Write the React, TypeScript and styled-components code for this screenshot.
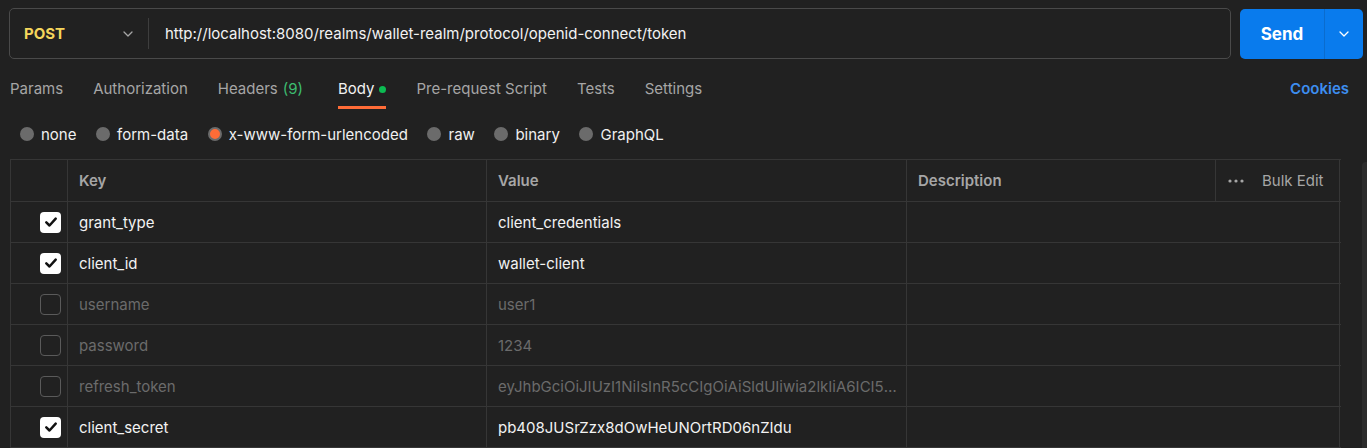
import React from 'react';
import styled, { createGlobalStyle } from 'styled-components';

const GlobalStyle = createGlobalStyle`
  html, body {
    margin: 0;
    padding: 0;
    background: #212121;
    font-family: Inter, "Open Sans", sans-serif;
    overflow: hidden;
  }
`;

const Page = styled.div`
  width: 1367px;
  height: 448px;
  background: #212121;
  color: #f0f0f0;
  position: relative;
  overflow: hidden;
`;

const RequestBar = styled.div`
  display: flex;
  gap: 9px;
  padding: 8px 4px 0 9px;
`;

const UrlBox = styled.div`
  flex: 1;
  height: 51px;
  box-sizing: border-box;
  border: 1px solid #4a4a4a;
  border-radius: 5px;
  display: flex;
  align-items: center;
`;

const Method = styled.div`
  width: 138px;
  box-sizing: border-box;
  padding: 0 14px;
  display: flex;
  align-items: center;
  justify-content: space-between;
  color: #f5d65c;
  font-weight: 700;
  font-size: 15px;
`;

const Divider = styled.div`
  width: 1px;
  height: 31px;
  background: #3e3e3e;
`;

const Url = styled.div`
  padding-left: 16px;
  font-size: 15px;
  color: #f2f2f2;
`;

const SendButton = styled.div`
  width: 123px;
  height: 50px;
  margin-top: 1px;
  background: #097bed;
  border-radius: 5px;
  display: flex;
  color: #fff;
`;

const SendLabel = styled.div`
  width: 84px;
  display: flex;
  align-items: center;
  justify-content: center;
  font-weight: 700;
  font-size: 17px;
  border-right: 1px solid #0a6cce;
`;

const SendArrow = styled.div`
  flex: 1;
  display: flex;
  align-items: center;
  justify-content: center;
`;

const Tabs = styled.div`
  display: flex;
  align-items: flex-start;
  height: 50px;
  padding: 0 10px;
  margin-top: 20px;
`;

const Tab = styled.div<{ $active?: boolean; $space?: number }>`
  margin-right: ${(p) => p.$space ?? 30}px;
  font-size: 15px;
  height: 30px;
  box-sizing: border-box;
  color: ${(p) => (p.$active ? '#f2f2f2' : '#a6a6a6')};
  display: flex;
  gap: 5px;
  border-bottom: 3px solid ${(p) => (p.$active ? '#ff6c37' : 'transparent')};
`;

const Count = styled.span`
  color: #3dbd70;
  margin-left: 5px;
`;

const Dot = styled.span`
  width: 7px;
  height: 7px;
  border-radius: 50%;
  background: #0cbb52;
  margin-top: 7px;
`;

const Cookies = styled.div`
  margin-left: auto;
  color: #3d8ef0;
  font-weight: 600;
  font-size: 15px;
  margin-right: 8px;
`;

const Radios = styled.div`
  display: flex;
  align-items: center;
  padding: 0 20px;
  height: 28px;
  margin-top: -9px;
`;

const Radio = styled.label`
  display: flex;
  align-items: center;
  gap: 7px;
  margin-right: 19.6px;
  font-size: 15px;
  color: #f0f0f0;
`;

const RadioDot = styled.span<{ $on?: boolean }>`
  width: 14px;
  height: 14px;
  border-radius: 50%;
  box-sizing: border-box;
  background: ${(p) => (p.$on ? '#ff6c37' : '#6b6b6b')};
  border: ${(p) => (p.$on ? '2px solid #6b6b6b' : 'none')};
`;

const Table = styled.div`
  margin: 11px 0 0 10px;
  width: 1330px;
  border-top: 1px solid #363636;
  border-left: 1px solid #363636;
`;

const Row = styled.div<{ $head?: boolean }>`
  display: grid;
  grid-template-columns: 57px 419px 420px 309px 124px;
  height: ${(p) => (p.$head ? 42 : 41)}px;
  box-sizing: border-box;
  border-bottom: 1px solid #363636;
`;

const Cell = styled.div<{ $muted?: boolean; $head?: boolean; $span?: number }>`
  display: flex;
  align-items: center;
  padding-left: 11px;
  grid-column: span ${(p) => p.$span ?? 1};
  border-right: 1px solid #363636;
  font-size: 15px;
  font-weight: ${(p) => (p.$head ? 600 : 400)};
  color: ${(p) => (p.$head ? '#a6a6a6' : p.$muted ? '#6b6b6b' : '#f2f2f2')};
  white-space: nowrap;
  overflow: hidden;
  min-width: 0;
`;

const CheckCell = styled.div`
  display: flex;
  align-items: center;
  justify-content: flex-end;
  padding-right: 6px;
  border-right: 1px solid #363636;
`;

const Box = styled.div<{ $on?: boolean }>`
  width: 21px;
  height: 21px;
  box-sizing: border-box;
  border-radius: 4px;
  background: ${(p) => (p.$on ? '#ffffff' : 'transparent')};
  border: ${(p) => (p.$on ? 'none' : '1px solid #5a5a5a')};
  display: flex;
  align-items: center;
  justify-content: center;
`;

const Trunc = styled.span`
  overflow: hidden;
  text-overflow: ellipsis;
  white-space: nowrap;
  max-width: 404px;
`;

const BulkCell = styled.div`
  display: flex;
  align-items: center;
  gap: 18px;
  padding-left: 12px;
  font-size: 15px;
  color: #a6a6a6;
  border-right: 1px solid #363636;
`;

const Scrollbar = styled.div`
  position: absolute;
  right: 0;
  top: 162px;
  width: 5px;
  bottom: 0;
  background: #2c2c2c;
  border-radius: 4px 0 0 0;
`;

const Chevron = ({ color = '#a6a6a6' }: { color?: string }) => (
  <svg width="12" height="12" viewBox="0 0 12 12" fill="none">
    <path d="M2 4l4 4 4-4" stroke={color} strokeWidth="1.3" strokeLinecap="round" strokeLinejoin="round" />
  </svg>
);

const Check = () => (
  <svg width="14" height="14" viewBox="0 0 14 14" fill="none">
    <path d="M2.3 7.4l3.2 3.1L11.7 3.7" stroke="#111" strokeWidth="2.5" strokeLinecap="round" strokeLinejoin="round" />
  </svg>
);

const Dots = () => (
  <svg width="16" height="4" viewBox="0 0 16 4">
    <circle cx="2" cy="2" r="1.6" fill="#a6a6a6" />
    <circle cx="8" cy="2" r="1.6" fill="#a6a6a6" />
    <circle cx="14" cy="2" r="1.6" fill="#a6a6a6" />
  </svg>
);

const params = [
  { key: 'grant_type', value: 'client_credentials', on: true },
  { key: 'client_id', value: 'wallet-client', on: true },
  { key: 'username', value: 'user1', on: false },
  { key: 'password', value: '1234', on: false },
  {
    key: 'refresh_token',
    value: 'eyJhbGciOiJIUzI1NiIsInR5cCIgOiAiSldUIiwia2lkIiA6ICI5YzQ0NTk2Zi1hNTNlLTQ4',
    on: false,
  },
  { key: 'client_secret', value: 'pb408JUSrZzx8dOwHeUNOrtRD06nZIdu', on: true },
];

const radios = ['none', 'form-data', 'x-www-form-urlencoded', 'raw', 'binary', 'GraphQL'];

const App: React.FC = () => {
  return (
    <Page>
      <GlobalStyle />
      <RequestBar>
        <UrlBox>
          <Method>
            POST
            <Chevron />
          </Method>
          <Divider />
          <Url>http://localhost:8080/realms/wallet-realm/protocol/openid-connect/token</Url>
        </UrlBox>
        <SendButton>
          <SendLabel>Send</SendLabel>
          <SendArrow>
            <Chevron color="#ffffff" />
          </SendArrow>
        </SendButton>
      </RequestBar>

      <Tabs>
        <Tab>Params</Tab>
        <Tab>Authorization</Tab>
        <Tab $space={35}>
          <span>
            Headers<Count>(9)</Count>
          </span>
        </Tab>
        <Tab $active>
          Body
          <Dot />
        </Tab>
        <Tab>Pre-request Script</Tab>
        <Tab>Tests</Tab>
        <Tab>Settings</Tab>
        <Cookies>Cookies</Cookies>
      </Tabs>

      <Radios>
        {radios.map((r) => (
          <Radio key={r}>
            <RadioDot $on={r === 'x-www-form-urlencoded'} />
            {r}
          </Radio>
        ))}
      </Radios>

      <Table>
        <Row $head>
          <CheckCell />
          <Cell $head>Key</Cell>
          <Cell $head>Value</Cell>
          <Cell $head>Description</Cell>
          <BulkCell>
            <Dots />
            Bulk Edit
          </BulkCell>
        </Row>
        {params.map((p) => (
          <Row key={p.key}>
            <CheckCell>
              <Box $on={p.on}>{p.on && <Check />}</Box>
            </CheckCell>
            <Cell $muted={!p.on}>{p.key}</Cell>
            <Cell $muted={!p.on}>
              <Trunc>{p.value}</Trunc>
            </Cell>
            <Cell $span={2} />
          </Row>
        ))}
      </Table>
      <Scrollbar />
    </Page>
  );
};

export default App;
